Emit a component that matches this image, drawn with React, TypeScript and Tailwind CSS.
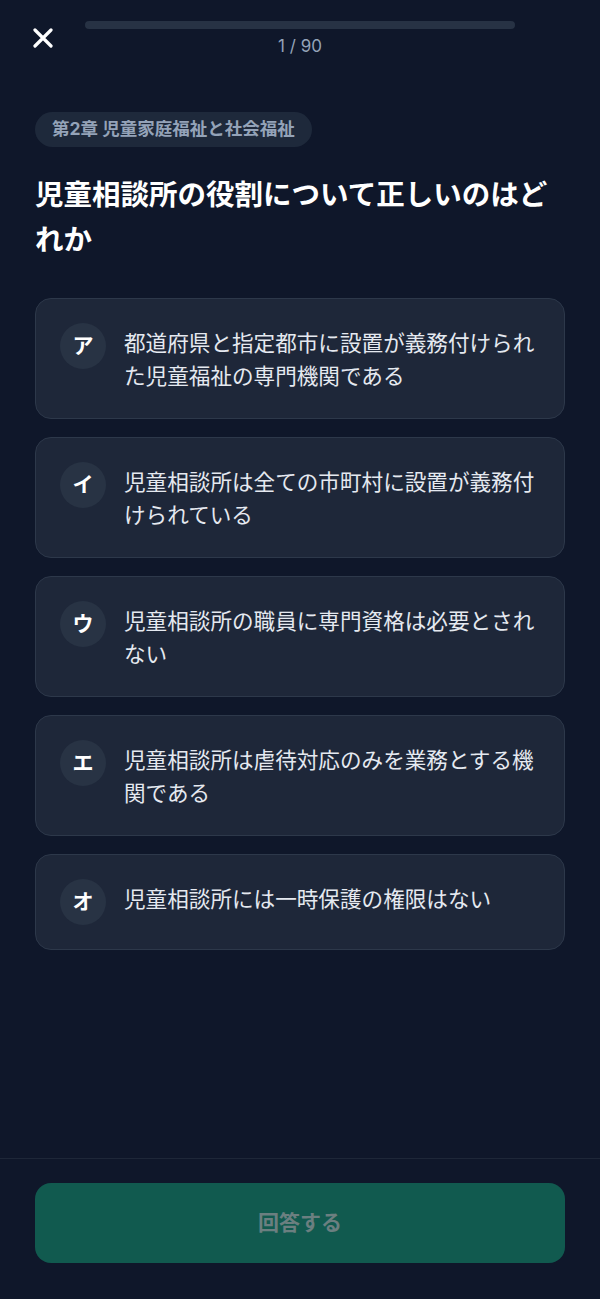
import React from "react";

const options: { key: string; text: string }[] = [
  { key: "ア", text: "都道府県と指定都市に設置が義務付けられた児童福祉の専門機関である" },
  { key: "イ", text: "児童相談所は全ての市町村に設置が義務付けられている" },
  { key: "ウ", text: "児童相談所の職員に専門資格は必要とされない" },
  { key: "エ", text: "児童相談所は虐待対応のみを業務とする機関である" },
  { key: "オ", text: "児童相談所には一時保護の権限はない" },
];

export default function App() {
  return (
    <div
      className="min-h-screen w-full bg-[#0f172a] flex flex-col"
      style={{ fontFamily: 'Inter, "Noto Sans CJK JP", sans-serif' }}
    >
      {/* Header */}
      <div className="grid grid-cols-[85px_1fr_85px]">
        <div className="flex justify-center pt-[28px]">
          <button aria-label="close" className="w-5 h-5 flex items-center justify-center">
            <svg width="20" height="20" viewBox="0 0 20 20" fill="none">
              <path
                d="M2 2 L18 18 M18 2 L2 18"
                stroke="#ffffff"
                strokeWidth="3.2"
                strokeLinecap="round"
              />
            </svg>
          </button>
        </div>
        <div className="flex flex-col items-center pt-[21px]">
          <div className="w-full h-2 rounded-full bg-[#273244]" />
          <div className="mt-[5px] text-[17px] leading-6 text-[#94a3b8]">1 / 90</div>
        </div>
        <div />
      </div>

      {/* Main */}
      <main className="flex-1 px-[35px]">
        <div className="mt-[54px] inline-flex h-[35px] items-center rounded-full bg-[#1e293b] px-[17px] text-[17.5px] font-bold text-[#94a3b8]">
          第2章 児童家庭福祉と社会福祉
        </div>
        <h1 className="mt-[26px] text-[28.5px] font-bold leading-[44.8px] text-white">
          児童相談所の役割について正しいのはどれか
        </h1>
        <div className="mt-[35px] flex flex-col gap-[18px]">
          {options.map((o) => (
            <div
              key={o.key}
              className="flex items-start rounded-2xl border border-[#2d384a] bg-[#1e2739] pl-6 pr-5 py-6"
            >
              <div className="w-[46px] h-[46px] shrink-0 rounded-full bg-[#283344] flex items-center justify-center text-[21px] font-bold text-white">
                {o.key}
              </div>
              <div className="ml-[18px] flex-1 pt-[4px] text-[21.6px] leading-[33.5px] text-[#e5e9f0]">
                {o.text}
              </div>
            </div>
          ))}
        </div>
      </main>

      {/* Footer */}
      <footer className="border-t border-[#1e2738] px-[35px] pt-6 pb-9">
        <button className="w-full h-20 rounded-2xl bg-[#115a4f] text-[21px] font-bold text-[#6b7f80]">
          回答する
        </button>
      </footer>
    </div>
  );
}
